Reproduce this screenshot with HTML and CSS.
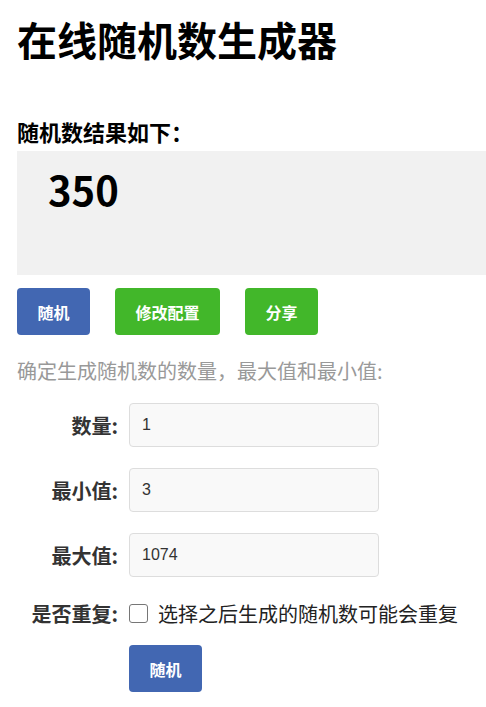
FILE: index.html
```html
<!DOCTYPE html>
<html lang="zh-CN">
<head>
    <meta charset="UTF-8">
    <meta name="viewport" content="width=device-width, initial-scale=1.0">
    <title>在线随机数生成器</title>
    <link rel="stylesheet" href="styles.css">
</head>
<body>
    <div class="container">
        <h1>在线随机数生成器</h1>

        <!-- 结果 -->
        <h3 class="result-title">随机数结果如下：</h3>
        <div class="result-box">
            <span class="result-num">350</span>
        </div>

        <div class="actions">
            <button class="btn btn-blue">随机</button>
            <button class="btn btn-green">修改配置</button>
            <button class="btn btn-green">分享</button>
        </div>

        <!-- 配置 -->
        <p class="tip">确定生成随机数的数量，最大值和最小值:</p>
        <form class="config">
            <label for="count">数量:</label>
            <input type="text" id="count" value="1">

            <label for="min">最小值:</label>
            <input type="text" id="min" value="3">

            <label for="max">最大值:</label>
            <input type="text" id="max" value="1074">

            <label>是否重复:</label>
            <div class="check-row">
                <input type="checkbox" id="repeat">
                <label for="repeat" class="check-text">选择之后生成的随机数可能会重复</label>
            </div>

            <span></span>
            <div class="submit-row">
                <button type="button" class="btn btn-blue">随机</button>
            </div>
        </form>
    </div>
</body>
</html>
```

FILE: styles.css
```css
body {
    margin: 0;
    font-family: "Noto Sans CJK SC", "Liberation Sans", sans-serif;
    color: #000;
    background-color: #fff;
}
.container {
    padding: 0 0 0 17px;
}
h1 {
    margin: 9px 0 0;
    font-size: 40px;
    line-height: 60px;
    font-weight: bold;
}
.result-title {
    margin: 47px 0 0;
    font-size: 22px;
    line-height: 30px;
    font-weight: bold;
}
.result-box {
    margin-top: 5px;
    height: 124px;
    background-color: #f1f1f1;
    padding: 13px 0 0 31px;
    box-sizing: border-box;
}
.result-num {
    font-size: 40px;
    line-height: 50px;
    font-weight: bold;
}
.actions {
    display: flex;
    gap: 25px;
    margin-top: 13px;
}
.btn {
    height: 47px;
    padding: 0 20.5px;
    border: none;
    border-radius: 4px;
    color: #fff;
    font-family: "Noto Sans CJK SC", sans-serif;
    font-size: 16px;
    font-weight: bold;
    cursor: pointer;
}
.btn-blue {
    background-color: #4267b2;
}
.btn-green {
    background-color: #42b72a;
}
.tip {
    margin: 21px 0 0;
    font-size: 20px;
    line-height: 30px;
    color: #999;
}
.config {
    display: grid;
    grid-template-columns: 101px 1fr;
    column-gap: 11px;
    row-gap: 21px;
    align-items: center;
    margin-top: 17px;
}
.config > label {
    text-align: right;
    font-size: 20px;
    font-weight: bold;
    color: #333;
}
.config input[type="text"] {
    width: 250px;
    height: 44px;
    box-sizing: border-box;
    padding: 0 12px;
    border: 1px solid #ddd;
    border-radius: 4px;
    background-color: #f9f9f9;
    font-family: "Liberation Sans", Arial, sans-serif;
    font-size: 16px;
    color: #333;
}
.check-row {
    display: flex;
    align-items: center;
    height: 30px;
}
.check-row input {
    appearance: none;
    width: 19px;
    height: 19px;
    margin: 0 10px 0 0;
    border: 1px solid #767676;
    border-radius: 3px;
    background: #fff;
}
.check-text {
    font-size: 20px;
    color: #222;
}
.submit-row {
    margin-top: -4px;
}
```
